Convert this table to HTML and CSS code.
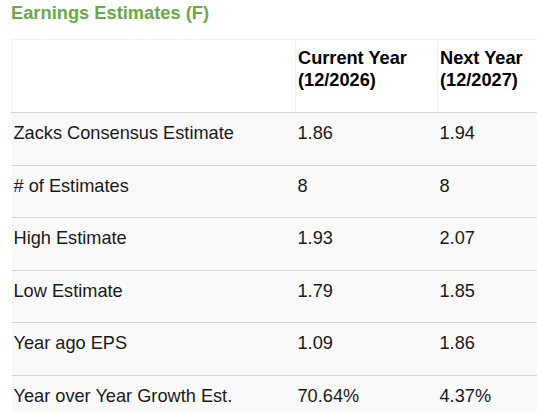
FILE: index.html
```html
<!DOCTYPE html>
<html lang="en">
<head>
    <meta charset="UTF-8">
    <meta name="viewport" content="width=device-width, initial-scale=1.0">
    <title>Earnings Estimates (F)</title>
    <link rel="stylesheet" href="styles.css">
</head>
<body>
    <div class="estimates">
        <h2 class="estimates-title">Earnings Estimates (F)</h2>
        <table class="estimates-table">
            <thead>
                <tr>
                    <th class="col-label"></th>
                    <th class="col-year">Current Year<br>(12/2026)</th>
                    <th class="col-year">Next Year<br>(12/2027)</th>
                </tr>
            </thead>
            <tbody>
                <tr>
                    <td>Zacks Consensus Estimate</td>
                    <td>1.86</td>
                    <td>1.94</td>
                </tr>
                <tr>
                    <td># of Estimates</td>
                    <td>8</td>
                    <td>8</td>
                </tr>
                <tr>
                    <td>High Estimate</td>
                    <td>1.93</td>
                    <td>2.07</td>
                </tr>
                <tr>
                    <td>Low Estimate</td>
                    <td>1.79</td>
                    <td>1.85</td>
                </tr>
                <tr>
                    <td>Year ago EPS</td>
                    <td>1.09</td>
                    <td>1.86</td>
                </tr>
                <tr>
                    <td>Year over Year Growth Est.</td>
                    <td>70.64%</td>
                    <td>4.37%</td>
                </tr>
            </tbody>
        </table>
    </div>
</body>
</html>
```

FILE: styles.css
```css
body {
    margin: 0;
    padding: 0 0 0 11px;
    font-family: "Liberation Sans", Arial, Helvetica, sans-serif;
    color: #1a1a1a;
    background: #fff;
}
.estimates-title {
    margin: 2px 0 16px;
    font-size: 18.3px;
    line-height: 21px;
    font-weight: bold;
    color: #6aa845; /* zacks green */
}
.estimates-table {
    width: 526px;
    border-collapse: collapse;
    table-layout: fixed;
    font-size: 18.2px;
}
.estimates-table th {
    text-align: left;
    vertical-align: top;
    font-weight: bold;
    color: #000;
    line-height: 22px;
    padding: 7px 2px 21px;
    border: 1px solid #f2f2f2;
    border-bottom: 1px solid #d2d2d2;
    background: #fff;
}
.estimates-table th:last-child {
    border-right-color: transparent;
}
.estimates-table .col-label {
    width: 279px;
}
.estimates-table .col-year {
    width: 137px;
}
.estimates-table .col-year:last-child {
    width: auto;
}
.estimates-table td {
    line-height: 21px;
    padding: 10px 2px 20.5px;
    background: #f9f9f9;
    border-bottom: 1px solid #d2d2d2;
    white-space: nowrap;
}
.estimates-table tbody tr:last-child td {
    border-bottom: none;
}
```
